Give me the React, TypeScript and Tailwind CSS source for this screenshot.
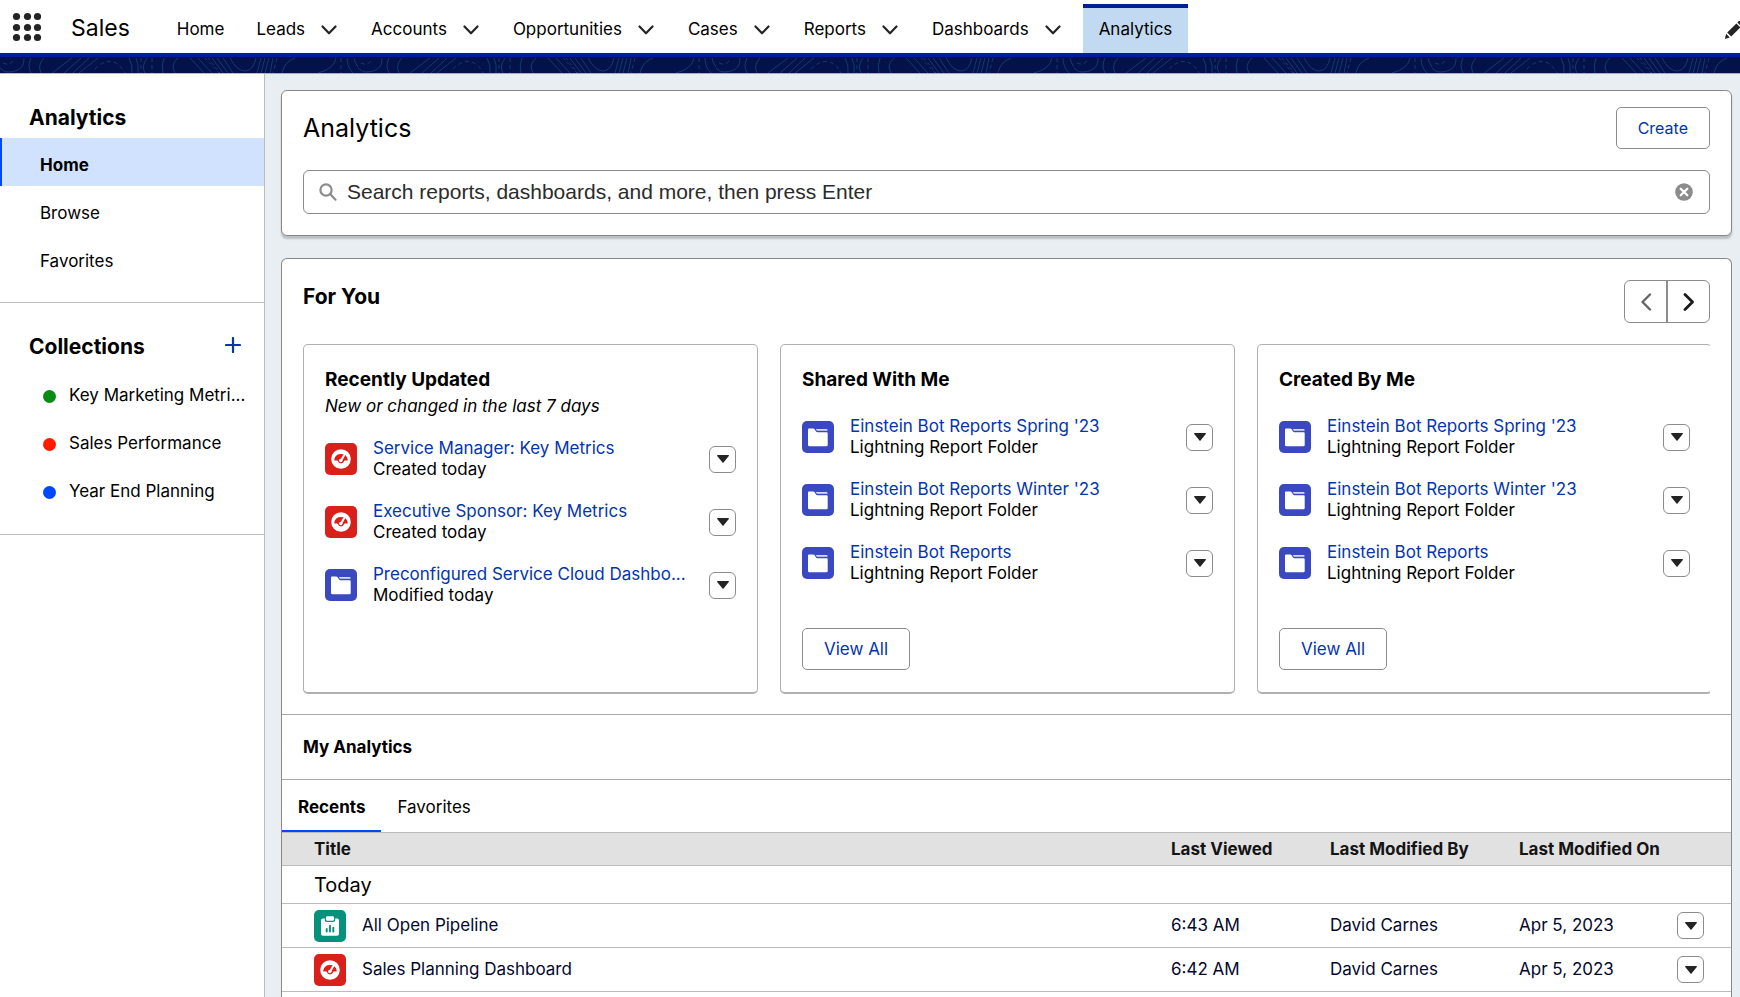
import { useState } from 'react';
import type { ReactNode } from 'react';
import clsx from 'clsx';

type IconKind = 'dashboard' | 'folder' | 'report';

interface FolderItem {
  title: string;
  detail: string;
  icon: IconKind;
}

interface CardData {
  title: string;
  subtitle?: string;
  items: FolderItem[];
  viewAll: boolean;
}

interface RecentItem {
  title: string;
  viewed: string;
  by: string;
  on: string;
  icon: IconKind;
}

const navItems = [
  { label: 'Home', menu: false },
  { label: 'Leads', menu: true },
  { label: 'Accounts', menu: true },
  { label: 'Opportunities', menu: true },
  { label: 'Cases', menu: true },
  { label: 'Reports', menu: true },
  { label: 'Dashboards', menu: true },
];

const sideItems = ['Home', 'Browse', 'Favorites'];

const collections = [
  { label: 'Key Marketing Metri...', color: 'bg-[#0b8a16]' },
  { label: 'Sales Performance', color: 'bg-[#ff1a00]' },
  { label: 'Year End Planning', color: 'bg-[#0048ff]' },
];

const botFolders: FolderItem[] = [
  { title: "Einstein Bot Reports Spring '23", detail: 'Lightning Report Folder', icon: 'folder' },
  { title: "Einstein Bot Reports Winter '23", detail: 'Lightning Report Folder', icon: 'folder' },
  { title: 'Einstein Bot Reports', detail: 'Lightning Report Folder', icon: 'folder' },
];

const cards: CardData[] = [
  {
    title: 'Recently Updated',
    subtitle: 'New or changed in the last 7 days',
    items: [
      { title: 'Service Manager: Key Metrics', detail: 'Created today', icon: 'dashboard' },
      { title: 'Executive Sponsor: Key Metrics', detail: 'Created today', icon: 'dashboard' },
      { title: 'Preconfigured Service Cloud Dashbo...', detail: 'Modified today', icon: 'folder' },
    ],
    viewAll: false,
  },
  { title: 'Shared With Me', items: botFolders, viewAll: true },
  { title: 'Created By Me', items: botFolders, viewAll: true },
];

const recents: RecentItem[] = [
  { title: 'All Open Pipeline', viewed: '6:43 AM', by: 'David Carnes', on: 'Apr 5, 2023', icon: 'report' },
  { title: 'Sales Planning Dashboard', viewed: '6:42 AM', by: 'David Carnes', on: 'Apr 5, 2023', icon: 'dashboard' },
];

function Chevron() {
  return (
    <svg viewBox="0 0 16 10" className="h-[10px] w-4" fill="none" stroke="#242424" strokeWidth="2.2" strokeLinecap="round" strokeLinejoin="round">
      <path d="M1.5 1.5 8 8.3l6.5-6.8" />
    </svg>
  );
}

function EntityIcon({ kind }: { kind: IconKind }) {
  if (kind === 'dashboard') {
    return (
      <svg viewBox="0 0 32 32" className="h-8 w-8 shrink-0 rounded-[5px] bg-[#d9201a]">
        <circle cx="16" cy="16" r="9.8" fill="#fff" />
        <path d="M9.2 16.8a6.9 6.9 0 0 1 13.6 0c0 .4-.2.6-.6.6h-2.4c-.4 0-.6.2-.7.6a3.2 3.2 0 0 1-6.2 0c-.1-.4-.3-.6-.7-.6H9.8c-.4 0-.6-.2-.6-.6z" fill="#d9201a" />
        <path d="m19.2 12-2.9 5.3" stroke="#fff" strokeWidth="2" strokeLinecap="round" />
        <circle cx="15.8" cy="17.5" r="1.7" fill="#fff" />
      </svg>
    );
  }
  if (kind === 'folder') {
    return (
      <svg viewBox="0 0 32 32" className="h-8 w-8 shrink-0 rounded-[5px] bg-[#3a49c1]" fill="#fff">
        <path d="M7.2 7.4h4c.6 0 .9.3 1.2.7l1.7 2.5c.3.4.6.6 1.2.6h9.2c.8 0 1.2.5 1.2 1.2v11.6c0 .8-.4 1.2-1.2 1.2H7.2c-.8 0-1.2-.4-1.2-1.2V8.6c0-.8.4-1.2 1.2-1.2z" />
        <path d="M13.8 8h10.7c.7 0 1 .4 1 1v.7H15.3c-.4 0-.7-.2-.9-.6z" opacity=".8" />
      </svg>
    );
  }
  return (
    <svg viewBox="0 0 32 32" className="h-8 w-8 shrink-0 rounded-[5px] bg-[#06917d]">
      <path d="M9 8.5h14c1.3 0 2 .7 2 2v13.3c0 1.3-.7 2-2 2H9c-1.3 0-2-.7-2-2V10.5c0-1.3.7-2 2-2z" fill="#fff" />
      <path d="M10.8 8.5h10.4v1.6c0 1.3-.7 2-2 2h-6.4c-1.3 0-2-.7-2-2z" fill="#06917d" />
      <rect x="12" y="6.2" width="8" height="4.6" rx="1.3" fill="#fff" />
      <path d="M12.7 18.9v2.7M16 15.8v5.8M19.3 17.8v3.8" stroke="#06917d" strokeWidth="1.9" strokeLinecap="round" />
    </svg>
  );
}

function MenuButton({ label }: { label: string }) {
  return (
    <button
      type="button"
      aria-label={`Actions for ${label}`}
      className="flex h-[27px] w-[27px] shrink-0 items-center justify-center rounded-[6px] border border-[#8c8c8c] bg-white"
    >
      <svg viewBox="0 0 12 8" className="h-2 w-3" fill="#242424">
        <path d="M.6 0h10.8c.5 0 .7.5.4.9L6.5 7.6c-.3.4-.7.4-1 0L.2.9C-.1.5.1 0 .6 0z" />
      </svg>
    </button>
  );
}

function OutlineButton({ small, children }: { small?: boolean; children: ReactNode }) {
  return (
    <button
      type="button"
      className={clsx(
        'h-[42px] rounded-[5px] border border-[#8c8c8c] bg-white px-[21px] text-[#0435ac]',
        small ? 'text-[16px]' : 'pt-0.5 text-[17px]'
      )}
    >
      {children}
    </button>
  );
}

// Decorative contour lines under the navigation bar
function ContourBand() {
  return (
    <svg aria-hidden="true" className="block h-4 w-full bg-[#03124a]">
      <defs>
        <pattern id="contours" width="358" height="16" patternUnits="userSpaceOnUse">
          <g fill="none" stroke="#12396f" strokeWidth="1">
            <path d="M0 11q5 5 8 4 11 0 15-7 1-3 1-7M31 16q-4-7 0-15M41 16q-4-8 3-15" />
            <path d="M52 16 72 1M64 16 81 1M73 16 89 1M79 16 98 1" />
            <path d="M3 6q6 3 10-2M95 12q14-14 26-2l4 6M141 1v15M152 1v15M277 1l-4 15" strokeDasharray="4 3" />
            <path d="M129 1q4 7 3 15M136 1q3 7 2 15M147 1q-6 8-2 15M164 1q-3 8-1 15M178 1q-8 7-3 15" />
            <path d="M190 1l14 15M198 1l14 15M212 1l11 15M217 1l11 15M223 1l10 15" />
            <path d="M205 1l14 15M208 1l12 15" strokeDasharray="3 3" />
            <path d="M230 1q7 13 15 13t11-13M261 1l-4 15M265 1l-4 15M269 1l-4 15M273 1l-3 15M295 1q-11 4-13 15" />
            <path d="M318 16q16-4 18-15M347 1q0 9 6 15M354 1q1 5 4 9" />
            <path d="M341 1v15" strokeDasharray="4 3" />
          </g>
        </pattern>
      </defs>
      <rect width="100%" height="16" fill="url(#contours)" />
    </svg>
  );
}

function ForYouCard({ card }: { card: CardData }) {
  return (
    <article className="flex h-[350px] min-w-0 flex-col rounded-[5px] border border-b-2 border-[#b0b0b0] px-[21px] py-[22px]">
      <h3 className="text-[19px] leading-[26px] font-bold">{card.title}</h3>
      {card.subtitle && <p className="text-[17px] leading-[26px] italic">{card.subtitle}</p>}
      <ul className={clsx('flex flex-col gap-[21px]', card.subtitle ? 'mt-[19px]' : 'mt-[23px]')}>
        {card.items.map((item) => (
          <li key={item.title} className="flex items-center">
            <EntityIcon kind={item.icon} />
            <div className="mr-4 ml-4 min-w-0 flex-1 text-[17px] leading-[21px]">
              <p className="truncate">
                <a href="#" className="text-[#0435ac]">{item.title}</a>
              </p>
              <p>{item.detail}</p>
            </div>
            <MenuButton label={item.title} />
          </li>
        ))}
      </ul>
      {card.viewAll && (
        <div className="mt-auto">
          <OutlineButton>View All</OutlineButton>
        </div>
      )}
    </article>
  );
}

export default function App() {
  const [search, setSearch] = useState('');
  const [sideActive, setSideActive] = useState('Home');
  const [tab, setTab] = useState('Recents');

  return (
    <div className="flex min-h-screen flex-col bg-white font-['Inter','Liberation_Sans',sans-serif] text-[17px] text-black">
      <header>
        <div className="flex h-[53px] items-stretch overflow-hidden">
          <button type="button" aria-label="App Launcher" className="ml-3 flex items-center">
            <svg viewBox="0 0 30 30" className="h-[30px] w-[30px]" fill="#242424">
              {[4.5, 15.5, 25.5].map((y) =>
                [4.5, 15.5, 25.5].map((x) => <circle key={`${x}-${y}`} cx={x} cy={y} r="3.6" />)
              )}
            </svg>
          </button>
          <span className="ml-[29px] flex items-center pt-1 text-[23px]">Sales</span>
          <nav className="ml-[31px] flex items-stretch">
            {navItems.map((item) => (
              <div key={item.label} className="flex items-center pt-1.5">
                <a href="#" className="px-4">{item.label}</a>
                {item.menu && (
                  <button type="button" aria-label={`${item.label} menu`} className="mr-[18px]">
                    <Chevron />
                  </button>
                )}
              </div>
            ))}
            <a href="#" className="mt-1 ml-1 flex items-center border-t-4 border-[#001e9c] bg-[#c1daf2] px-4 pb-0.5">
              Analytics
            </a>
          </nav>
          <button type="button" aria-label="Edit navigation" className="mt-[6px] -mr-[3px] ml-auto shrink-0">
            <svg viewBox="0 0 18 18" className="h-[18px] w-[18px]" fill="#242424">
              <path d="M0 17.2 1.2 12.8l3.6 3.6L.6 17.8c-.4.1-.7-.2-.6-.6zM2.2 11.6l9.2-9.2 4 4-9.2 9.2zM12.4 1.4l1-1c.5-.5 1.3-.5 1.8 0l2.2 2.2c.5.5.5 1.3 0 1.8l-1 1z" />
            </svg>
          </button>
        </div>
        <div className="h-1 bg-[#001e9c]" />
        <ContourBand />
      </header>

      <div className="flex flex-1">
        <aside className="w-[265px] shrink-0 border-t border-r border-[#bcbcbc]">
          <section className="border-b border-[#bcbcbc] pt-7 pb-[20px]">
            <h2 className="ml-[29px] text-[21px] leading-8 font-bold">Analytics</h2>
            <ul className="mt-1">
              {sideItems.map((item) => (
                <li key={item}>
                  <button
                    type="button"
                    onClick={() => setSideActive(item)}
                    className={clsx(
                      'flex h-12 w-full items-center border-l-2 pt-2 pl-[38px]',
                      item === sideActive ? 'border-[#0546ff] bg-[#d0e2fd] font-bold' : 'border-transparent'
                    )}
                  >
                    {item}
                  </button>
                </li>
              ))}
            </ul>
          </section>
          <section className="border-b border-[#bcbcbc] pt-7 pb-[18px]">
            <div className="flex items-center justify-between pr-[23px] pl-[29px]">
              <h2 className="text-[21px] leading-8 font-bold">Collections</h2>
              <button type="button" aria-label="New collection" className="pb-1">
                <svg viewBox="0 0 16 16" className="h-4 w-4" stroke="#0435ac" strokeWidth="2.2" strokeLinecap="round">
                  <path d="M8 1v14M1 8h14" />
                </svg>
              </button>
            </div>
            <ul className="mt-[9px]">
              {collections.map((item) => (
                <li key={item.label} className="flex h-12 items-center pr-3 pl-[43px]">
                  <span className={clsx('h-[13px] w-[13px] shrink-0 rounded-full', item.color)} />
                  <a href="#" className="ml-[13px] truncate">{item.label}</a>
                </li>
              ))}
            </ul>
          </section>
        </aside>

        <main className="flex min-w-0 flex-1 flex-col border-t border-[#a9adb2] bg-[#e9eef3] pt-4 pr-2 pl-4">
          <section className="rounded-[6px] border border-[#888] bg-white px-[21px] pt-4 pb-[21px] shadow-[0_3px_2px_rgba(0,0,0,0.2)]">
            <div className="flex items-center justify-between">
              <h1 className="text-[25px] leading-8">Analytics</h1>
              <OutlineButton small>Create</OutlineButton>
            </div>
            <div className="mt-[21px] flex h-11 items-center rounded-[6px] border border-[#8c8c8c] pr-4 pl-[15px]">
              <svg viewBox="0 0 18 18" className="h-[18px] w-[18px]" fill="none" stroke="#8c8c8c" strokeWidth="2.2" strokeLinecap="round">
                <circle cx="7" cy="7" r="5.6" />
                <path d="m11.3 11.3 5.2 5.4" />
              </svg>
              <input
                type="text"
                aria-label="Search analytics"
                value={search}
                onChange={(e) => setSearch(e.target.value)}
                placeholder="Search reports, dashboards, and more, then press Enter"
                className="ml-[10px] min-w-0 flex-1 font-['Liberation_Sans',Arial,sans-serif] text-[21px] outline-none placeholder:text-[#2b2b2b]"
              />
              <button type="button" aria-label="Clear search" onClick={() => setSearch('')}>
                <svg viewBox="0 0 18 18" className="h-[18px] w-[18px]">
                  <circle cx="9" cy="9" r="8.8" fill="#8c8c8c" />
                  <path d="m5.7 5.7 6.6 6.6M12.3 5.7l-6.6 6.6" stroke="#fff" strokeWidth="2.2" strokeLinecap="round" />
                </svg>
              </button>
            </div>
          </section>

          <section className="mt-[22px] flex-1 rounded-t-[6px] border border-b-0 border-[#888] bg-white">
            <div className="flex items-start justify-between px-[21px] pt-[21px]">
              <h2 className="text-[21px] leading-[34px] font-bold">For You</h2>
              <div className="flex h-[43px] overflow-hidden rounded-[6px] border border-[#8c8c8c]">
                <button type="button" aria-label="Previous" className="flex w-[41px] items-center justify-center">
                  <svg viewBox="0 0 12 18" className="h-[18px] w-3" fill="none" stroke="#666" strokeWidth="2.4" strokeLinecap="round" strokeLinejoin="round">
                    <path d="M10 1.5 2.5 9l7.5 7.5" />
                  </svg>
                </button>
                <button type="button" aria-label="Next" className="flex w-[43px] items-center justify-center border-l-2 border-[#8c8c8c]">
                  <svg viewBox="0 0 12 18" className="h-[18px] w-3" fill="none" stroke="#1a1a1a" strokeWidth="2.8" strokeLinecap="round" strokeLinejoin="round">
                    <path d="M2 1.5 9.5 9 2 16.5" />
                  </svg>
                </button>
              </div>
            </div>

            <div className="mx-[21px] mt-[21px] overflow-hidden">
              <div className="-mr-[2px] grid grid-cols-3 gap-[22px]">
                {cards.map((card) => (
                  <ForYouCard key={card.title} card={card} />
                ))}
              </div>
            </div>

            <h2 className="mt-5 border-y border-[#a9a9a9] px-[21px] py-5 leading-6 font-bold">My Analytics</h2>

            <div role="tablist" className="flex h-[52px]">
              {['Recents', 'Favorites'].map((name) => (
                <button
                  key={name}
                  type="button"
                  role="tab"
                  aria-selected={name === tab}
                  onClick={() => setTab(name)}
                  className={clsx('border-b-2 px-4 pt-1.5', name === tab ? 'border-[#0546ff] font-bold' : 'border-transparent')}
                >
                  {name}
                </button>
              ))}
            </div>

            <table className="w-full table-fixed border-collapse text-left">
              <colgroup>
                <col />
                <col className="w-[159px]" />
                <col className="w-[189px]" />
                <col className="w-[158px]" />
                <col className="w-[54px]" />
              </colgroup>
              <thead>
                <tr className="h-[33px] border-y border-[#bcbcbc] bg-[#e1e1e1] text-[#141414]">
                  <th className="pt-0.5 pl-8 font-bold">Title</th>
                  <th className="pt-0.5 font-bold">Last Viewed</th>
                  <th className="pt-0.5 font-bold">Last Modified By</th>
                  <th className="pt-0.5 font-bold">Last Modified On</th>
                  <th />
                </tr>
              </thead>
              <tbody>
                <tr className="h-[38px] border-b border-[#bcbcbc]">
                  <td colSpan={5} className="pl-8 text-[20px] leading-6">Today</td>
                </tr>
                {recents.map((row) => (
                  <tr key={row.title} className="h-11 border-b border-[#bcbcbc] text-[#03082e]">
                    <td className="pl-8">
                      <div className="flex items-center gap-4">
                        <EntityIcon kind={row.icon} />
                        <a href="#">{row.title}</a>
                      </div>
                    </td>
                    <td>{row.viewed}</td>
                    <td>{row.by}</td>
                    <td>{row.on}</td>
                    <td>
                      <MenuButton label={row.title} />
                    </td>
                  </tr>
                ))}
              </tbody>
            </table>
          </section>
        </main>
      </div>
    </div>
  );
}
